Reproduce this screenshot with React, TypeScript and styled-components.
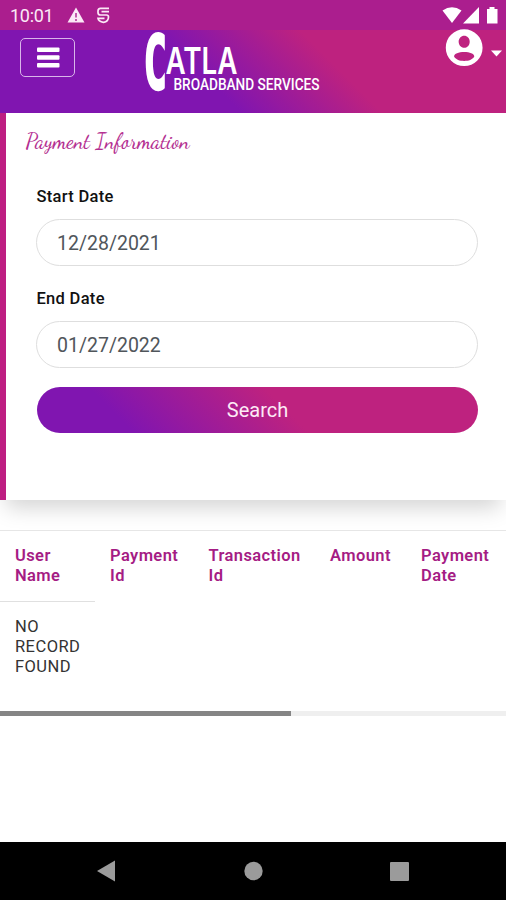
import React from "react";
import styled, { createGlobalStyle } from "styled-components";

const GlobalStyle = createGlobalStyle`
  * { box-sizing: border-box; }
  body { margin: 0; background: #fff; font-family: Roboto, "Liberation Sans", sans-serif; }
`;

const Screen = styled.div`
  width: 506px;
  height: 900px;
  display: flex;
  flex-direction: column;
  overflow: hidden;
  background: #fff;
`;

const StatusBar = styled.div`
  height: 30px;
  flex: none;
  display: flex;
  justify-content: space-between;
  background: #ab1e8e;
  color: #fbe9f6;
`;

const StatusLeft = styled.div`
  display: flex;
  align-items: center;
  padding: 2px 0 0 10px;
  font-size: 18px;
  line-height: 28px;
`;

const Clock = styled.span`
  width: 56px;
  letter-spacing: -0.3px;
`;

const Header = styled.header`
  height: 83px;
  flex: none;
  display: flex;
  align-items: flex-start;
  background: linear-gradient(45deg, #8015b0 41%, #be227f 65%);
`;

const MenuButton = styled.button`
  width: 55px;
  height: 39px;
  margin: 8px 0 0 20px;
  padding: 0;
  display: flex;
  align-items: center;
  justify-content: center;
  border: 1.5px solid #d9b5ea;
  border-radius: 5px;
  background: transparent;
`;

const Logo = styled.svg`
  margin-left: 67px;
  flex: none;
  overflow: visible;
`;

const Account = styled.div`
  display: flex;
  flex: 1;
  justify-content: flex-end;
  padding-right: 4px;
`;

const Card = styled.section`
  height: 387px;
  flex: none;
  border-left: 6px solid #be1e82;
  background: #fff;
  padding: 16px 28px 0 19px;
  box-shadow: 0 14px 20px -6px rgba(0, 0, 0, 0.17);
`;

const Title = styled.svg`
  display: block;
  overflow: visible;
`;

const Form = styled.div`
  padding: 23px 0 0 11px;
`;

const Label = styled.label`
  display: block;
  height: 33px;
  font-size: 16.5px;
  font-weight: 500;
  line-height: 21px;
  color: #111;
  letter-spacing: 0.3px;
  padding-left: 0.5px;
`;

const DateField = styled.div`
  height: 47px;
  width: 442px;
  margin-bottom: 22px;
  padding-left: 20px;
  border: 1.5px solid #dedede;
  border-radius: 24px;
  font-size: 19.5px;
  line-height: 47px;
  color: #50565b;
`;

const SearchButton = styled.button`
  display: block;
  width: 441px;
  height: 46px;
  margin: -3px 0 0 1px;
  padding: 0;
  border: 0;
  border-radius: 23px;
  background: linear-gradient(45deg, #8015b0 20%, #be227f 56%);
  color: #fdeaf6;
  font: 400 20px/47px Roboto, sans-serif;
`;

const TableArea = styled.section`
  flex: 1;
  margin-top: 30px;
  background: #fff;
  border-top: 1px solid #e6e6e6;
`;

const Grid = styled.div`
  display: grid;
  grid-template-columns: 95px 98.5px 121.5px 91px 100px;
  height: 180px;
  grid-template-rows: 71px 109px;
  font-size: 16.5px;
  line-height: 20px;
`;

const HeadCell = styled.div<{ $ruled?: boolean }>`
  padding: 15px 0 0 15px;
  border-bottom: 1px solid ${(p) => (p.$ruled ? "#e0e0e0" : "transparent")};
  font-weight: 600;
  color: #a51c84;
  white-space: pre-line;
  letter-spacing: 0.4px;
`;

const Cell = styled.div`
  padding: 15px 0 0 15px;
  color: #333;
  white-space: pre-line;
  letter-spacing: 0.45px;
`;

const ScrollTrack = styled.div`
  height: 5px;
  background: #efefef;
`;

const ScrollThumb = styled.div`
  width: 291px;
  height: 5px;
  background: #858585;
`;

const NavBar = styled.nav`
  height: 58px;
  flex: none;
  background: #000;
`;

const columns = [
  "User\nName",
  "Payment\nId",
  "Transaction\nId",
  "Amount",
  "Payment\nDate",
];

export default function App() {
  return (
    <>
      <GlobalStyle />
      <Screen>
        <StatusBar>
          <StatusLeft>
            <Clock>10:01</Clock>
            <svg width="50" height="20" viewBox="0 0 50 20">
              <path d="M10 1.500 18.500 16.500H1.500Z" fill="#fbe9f6" />
              <path d="M10 7v4.500M10 13v2" stroke="#ab1e8e" strokeWidth="1.400" />
              <path
                d="M43 2.300H34.500Q32 2.300 32 5v1.500Q32 9 34.500 9H40.500Q42.500 9 42.500 11Q42.500 15.500 37.500 16.300Q32.500 15.500 32 12.300H38.500M35.500 5.700H43"
                fill="none"
                stroke="#fbe9f6"
                strokeWidth="1.700"
              />
            </svg>
          </StatusLeft>
          <svg width="70" height="30" viewBox="436 0 70 30" fill="#fff">
            <path d="M442.500 10.500Q452 4 461.500 10.500L452 23Z" />
            <path d="M479 7v16.500h-16Z" />
            <path d="M489.500 7h5v2h3v14.500h-10.500V9h2.500Z" />
          </svg>
        </StatusBar>
        <Header>
          <MenuButton aria-label="Menu">
            <svg width="24" height="22" viewBox="0 0 24 22" fill="#fff">
              <rect x="1" y="0.500" width="22.500" height="4.500" rx="1" />
              <rect x="1" y="8.200" width="22.500" height="4.500" rx="1" />
              <rect x="1" y="16" width="22.500" height="4.500" rx="1" />
            </svg>
          </MenuButton>
          <Logo width="182" height="66" viewBox="142 30 182 66" fill="#fff">
            <text
              transform="translate(143.500 88.500) scale(0.52 1)"
              fontFamily="'DejaVu Sans Mono', monospace"
              fontWeight="700"
              fontSize="75"
              stroke="#fff"
              strokeWidth="2.500"
              strokeLinejoin="miter"
            >
              C
            </text>
            <text
              x="165.500"
              y="74"
              fontFamily="Inter, sans-serif"
              fontWeight="600"
              fontSize="36.500"
              textLength="72"
              lengthAdjust="spacingAndGlyphs"
            >
              ATLA
            </text>
            <text
              x="173.500"
              y="89.800"
              fontFamily="Roboto, sans-serif"
              fontWeight="500"
              fontSize="17"
              textLength="146"
              lengthAdjust="spacingAndGlyphs"
            >
              BROADBAND SERVICES
            </text>
          </Logo>
          <Account>
            <svg width="60" height="40" viewBox="442 30 60 40" overflow="visible" fill="#fff">
              <path
                transform="translate(442.100 25.600) scale(1.84)"
                fillRule="evenodd"
                d="M12 2C6.480 2 2 6.480 2 12s4.480 10 10 10 10-4.480 10-10S17.520 2 12 2zm0 3.500c1.660 0 3 1.340 3 3.300s-1.340 3.300-3 3.300-3-1.500-3-3.300S10.340 5.500 12 5.500zm0 13.700c-2.500 0-4.410-.600-5.500-2.400.030-1.500 2.500-2.400 5.500-2.400s5.470.900 5.500 2.400c-1.090 1.800-3 2.400-5.500 2.400z"
              />
              <path d="M491 50.500h11l-5.500 6Z" />
            </svg>
          </Account>
        </Header>
        <Card>
          <Title width="170" height="34" viewBox="0 0 170 34">
            <text
              x="0.500"
              y="18.500"
              fontFamily="'Dancing Script', Z003, 'URW Chancery L', cursive"
              fontSize="21"
              fontWeight="500"
              fill="#b42f91"
              textLength="164"
              lengthAdjust="spacing"
            >
              Payment Information
            </text>
          </Title>
          <Form>
            <Label>Start Date</Label>
            <DateField>12/28/2021</DateField>
            <Label>End Date</Label>
            <DateField>01/27/2022</DateField>
            <SearchButton>Search</SearchButton>
          </Form>
        </Card>
        <TableArea>
          <Grid>
            {columns.map((name, i) => (
              <HeadCell key={name} $ruled={i === 0}>
                {name}
              </HeadCell>
            ))}
            <Cell>{"NO\nRECORD\nFOUND"}</Cell>
          </Grid>
          <ScrollTrack>
            <ScrollThumb />
          </ScrollTrack>
        </TableArea>
        <NavBar>
          <svg width="506" height="58" viewBox="0 842 506 58" fill="#9b9b9b">
            <path d="M97 871 115 860.500v21Z" />
            <circle cx="253.500" cy="871" r="9.200" />
            <rect x="390" y="862" width="19" height="19" rx="1" />
          </svg>
        </NavBar>
      </Screen>
    </>
  );
}
